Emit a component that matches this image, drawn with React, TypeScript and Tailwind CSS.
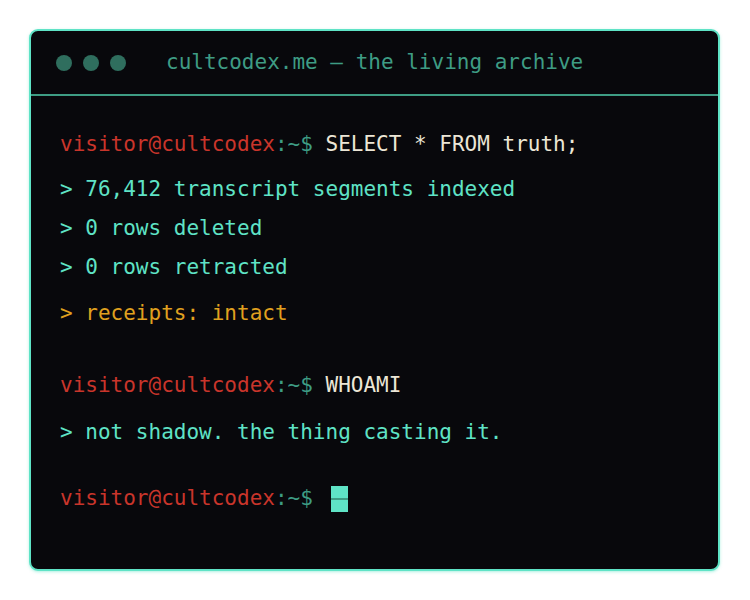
export default function App() {
  const mono = { fontFamily: '"DejaVu Sans Mono", "Liberation Mono", monospace' }

  const Prompt = () => (
    <>
      <span className="text-[#c9352b]">visitor@cultcodex</span>
      <span className="text-[#3e9c84]">:~$</span>
    </>
  )

  return (
    <div className="w-[750px] h-[600px] bg-white p-[29px_30px_30px_29px]" style={mono}>
      <div className="rounded-[9px] border-2 border-[#5fe3c6] bg-[#08080c] shadow-[0_1px_3px_rgba(95,227,198,0.5)] text-[21px] leading-[39px]">
        {/* Barra de título */}
        <div className="flex items-center h-[65px] pl-[25px] border-b-2 border-[#3e9c84]">
          <div className="flex gap-[11px]">
            <span className="w-4 h-4 rounded-full bg-[#2f6e5e]" />
            <span className="w-4 h-4 rounded-full bg-[#2f6e5e]" />
            <span className="w-4 h-4 rounded-full bg-[#2f6e5e]" />
          </div>
          <span className="ml-[40px] text-[#3e9c84] whitespace-pre">cultcodex.me — the living archive</span>
        </div>

        {/* Corpo do terminal */}
        <div className="px-[29px] pt-[29px] pb-[51px] whitespace-pre">
          <div>
            <Prompt /> <span className="text-[#ece6d6]">SELECT * FROM truth;</span>
          </div>
          <div className="mt-[6px] text-[#5fe3c6]">&gt; 76,412 transcript segments indexed</div>
          <div className="text-[#5fe3c6]">&gt; 0 rows deleted</div>
          <div className="text-[#5fe3c6]">&gt; 0 rows retracted</div>
          <div className="mt-[7px] text-[#e0a11f]">&gt; receipts: intact</div>

          <div className="mt-[33px]">
            <Prompt /> <span className="text-[#ece6d6]">WHOAMI</span>
          </div>
          <div className="mt-[8px] text-[#5fe3c6]">&gt; not shadow. the thing casting it.</div>

          <div className="mt-[27px] flex items-center">
            <Prompt />
            <span className="ml-[18px] w-[17px] h-[26px] bg-[#5fe3c6] flex flex-col justify-center">
              <span className="h-[2px] bg-[#3e9c84]" />
            </span>
          </div>
        </div>
      </div>
    </div>
  )
}
